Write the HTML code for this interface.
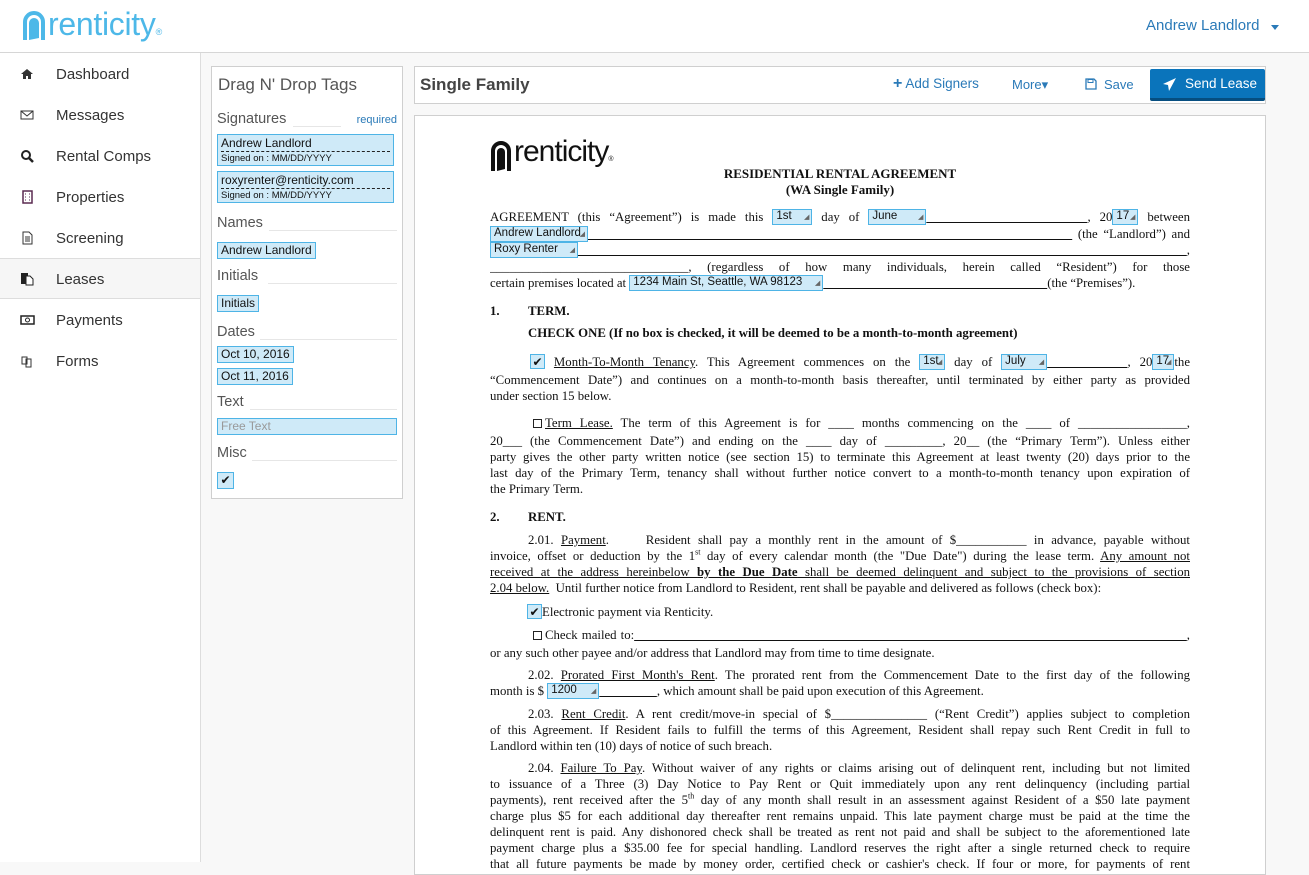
<!DOCTYPE html>
<html><head><meta charset="utf-8"><style>
*{box-sizing:border-box;margin:0;padding:0}
body{width:1309px;height:862px;overflow:hidden;background:#f8f8f8;font-family:"Liberation Sans",sans-serif;position:relative;color:#333}
.hdr{position:absolute;left:0;top:0;width:1309px;height:53px;background:#fff;border-bottom:1px solid #d6d6d6}
.side{position:absolute;left:0;top:53px;width:201px;height:809px;background:#fff;border-right:1px solid #ddd}
.nav{position:absolute;left:0;width:200px;height:41px;font-size:15px;color:#333;line-height:41px}
.nav span{position:absolute;left:56px}
.nav i{position:absolute;left:20px;top:13px;width:15px;height:15px;line-height:0}
.nav i svg{display:block}
.act{background:#f6f6f6;border-top:1px solid #ddd;border-bottom:1px solid #ddd}
.panel{position:absolute;background:#fff;border:1px solid #cfcfcf}
.sec{position:absolute;left:217px;width:180px;font-size:14.5px;color:#555;height:18px}
.tag{position:absolute;background:#cfeaf8;border:1px solid #4eb4e6;font-size:12px;color:#111;padding:0 3px;line-height:15px}
.doc{font-family:"Liberation Serif",serif;font-size:12.8px;color:#111}
.l{position:absolute;left:490px;width:700px;height:17px;line-height:16px;text-align:justify;text-align-last:justify;overflow:hidden;white-space:nowrap}
.nl{text-align:left;text-align-last:left}
.f{display:inline-block;background:#cfeaf8;border:1px solid #4eb4e6;font-family:"Liberation Sans",sans-serif;font-size:11.5px;line-height:13px;height:16px;padding:0 3px;vertical-align:top;position:relative;text-align:left;text-align-last:left;white-space:nowrap;overflow:hidden}
.f:after{content:"◢";position:absolute;right:2px;bottom:0;font-size:7px;color:#666}
.u{text-decoration:underline}
.cb{display:inline-block;width:15px;height:15px;border:1px solid #4eb4e6;background:#cfeaf8;vertical-align:top;text-align:center;font-size:12px;line-height:14px;font-family:"DejaVu Sans",sans-serif;text-align-last:center}
.bx{display:inline-block;width:9px;height:9px;border:1px solid #222;vertical-align:-1px;margin-right:3px}
.b{font-weight:bold}
.ln{position:absolute;bottom:2px;right:0;height:1px;background:#e6e6e6}
</style></head><body>
<div class="hdr">
 <svg style="position:absolute;left:22px;top:10px" width="24" height="32" viewBox="0 0 24 32"><path d="M3 30V12A9 9 0 0 1 21 12V30" fill="none" stroke="#4db8e8" stroke-width="4"/><path d="M7 30V13A5 5 0 0 1 17 13V28Z" fill="#4db8e8"/></svg>
 <div style="position:absolute;left:48px;top:6px;font-size:32px;color:#4db8e8;letter-spacing:-0.3px">renticity<span style="font-size:9px">®</span></div>
 <div style="position:absolute;left:1146px;top:17px;font-size:15px;color:#2a7ab8">Andrew Landlord</div>
 <div style="position:absolute;left:1271px;top:25px;border-left:4px solid transparent;border-right:4px solid transparent;border-top:5px solid #2a7ab8"></div>
</div>
<div class="side">
 <div class="nav" style="top:1px"><i><svg width="14" height="14" viewBox="0 0 14 14"><path d="M1 7L7 2L13 7H11V12H8V9H6V12H3V7Z" fill="#333"/></svg></i><span>Dashboard</span></div>
 <div class="nav" style="top:42px"><i><svg width="14" height="14"><rect x="1" y="3" width="12" height="8" fill="none" stroke="#333"/><path d="M1 3L7 8L13 3" fill="none" stroke="#333"/></svg></i><span>Messages</span></div>
 <div class="nav" style="top:83px"><i><svg width="14" height="14"><circle cx="6" cy="6" r="4" fill="none" stroke="#222" stroke-width="2"/><path d="M9 9L13 13" stroke="#222" stroke-width="2.5"/></svg></i><span>Rental Comps</span></div>
 <div class="nav" style="top:124px"><i><svg width="14" height="14"><rect x="3" y="1" width="9" height="12" fill="none" stroke="#5a2a50" stroke-width="1.5"/><path d="M5 4h1M9 4h1M5 7h1M9 7h1M5 10h1M9 10h1" stroke="#5a2a50"/></svg></i><span>Properties</span></div>
 <div class="nav" style="top:165px"><i><svg width="14" height="14"><path d="M3 1H9L12 4V13H3Z" fill="none" stroke="#333"/><path d="M5 6h5M5 8h5M5 10h5" stroke="#333"/></svg></i><span>Screening</span></div>
 <div class="nav act" style="top:205px"><i><svg width="14" height="14"><rect x="1" y="1" width="7" height="11" fill="#222"/><path d="M6 4H10L13 7V13H6Z" fill="#fff" stroke="#222"/></svg></i><span>Leases</span></div>
 <div class="nav" style="top:247px"><i><svg width="15" height="14"><rect x="1" y="3" width="13" height="8" fill="none" stroke="#222" stroke-width="1.5"/><circle cx="7.5" cy="7" r="2" fill="none" stroke="#222"/></svg></i><span>Payments</span></div>
 <div class="nav" style="top:288px"><i><svg width="14" height="14"><path d="M2 3H7V10H2Z M6 5H11V13H6Z" fill="#fff" stroke="#333"/></svg></i><span>Forms</span></div>
</div>
<div class="panel" style="left:211px;top:66px;width:192px;height:433px"></div>
<div style="position:absolute;left:218px;top:75px;font-size:17px;color:#555">Drag N' Drop Tags</div>
<div class="sec" style="top:111px">Signatures<span style="position:absolute;right:0;top:3px;font-size:11px;color:#2a7ab8">required</span><div class="ln" style="left:76px;right:56px"></div></div>
<div class="tag" style="left:217px;top:134px;width:177px;height:32px;line-height:14px;padding-top:1px">Andrew Landlord<div style="border-top:1px dashed #222;margin-top:1px;font-size:9.5px;line-height:13px">Signed on : MM/DD/YYYY</div></div>
<div class="tag" style="left:217px;top:171px;width:177px;height:32px;line-height:14px;padding-top:1px">roxyrenter@renticity.com<div style="border-top:1px dashed #222;margin-top:1px;font-size:9.5px;line-height:13px">Signed on : MM/DD/YYYY</div></div>
<div class="sec" style="top:215px">Names<div class="ln" style="left:52px"></div></div>
<div class="tag" style="left:217px;top:242px">Andrew Landlord</div>
<div class="sec" style="top:268px">Initials<div class="ln" style="left:51px"></div></div>
<div class="tag" style="left:217px;top:295px">Initials</div>
<div class="sec" style="top:324px">Dates<div class="ln" style="left:43px"></div></div>
<div class="tag" style="left:217px;top:346px">Oct 10, 2016</div>
<div class="tag" style="left:217px;top:368px">Oct 11, 2016</div>
<div class="sec" style="top:394px">Text<div class="ln" style="left:33px"></div></div>
<div class="tag" style="left:217px;top:418px;width:180px;color:#999">Free Text</div>
<div class="sec" style="top:445px">Misc<div class="ln" style="left:35px"></div></div>
<div class="tag" style="left:217px;top:472px;width:17px;height:17px;padding:0;text-align:center;font-family:'DejaVu Sans';font-size:12px">✔</div>

<div class="panel" style="left:414px;top:66px;width:852px;height:38px"></div>
<div style="position:absolute;left:420px;top:75px;font-size:17px;font-weight:bold;color:#444">Single Family</div>
<div style="position:absolute;left:893px;top:76px;font-size:13.5px;color:#2a7ab8"><b style="font-size:16px;line-height:12px">+</b> Add Signers</div>
<div style="position:absolute;left:1012px;top:77px;font-size:13px;color:#2a7ab8">More▾</div>
<div style="position:absolute;left:1085px;top:77px;font-size:13px;color:#2a7ab8"><svg width="12" height="12" style="vertical-align:-1px;margin-right:7px"><path d="M1 1H9L11 3V11H1Z" fill="none" stroke="#2a7ab8" stroke-width="1.3"/><rect x="3" y="1.5" width="5" height="3" fill="none" stroke="#2a7ab8"/></svg>Save</div>
<div style="position:absolute;left:1150px;top:69px;width:115px;height:32px;background:#0a74bb;border-bottom:3px solid #064e80;border-radius:2px;color:#fff;font-size:13.5px;line-height:30px;padding-left:35px">Send Lease
 <svg style="position:absolute;left:12px;top:8px" width="15" height="15" viewBox="0 0 15 15"><path d="M14 1L1 7L6 8L7 14Z" fill="#fff"/></svg></div>

<div class="panel" style="left:414px;top:115px;width:852px;height:760px"></div>
<div class="doc">
 <svg style="position:absolute;left:490px;top:140px" width="22" height="32" viewBox="0 0 22 32"><path d="M3 31V11A8 8 0 0 1 19 11V31" fill="none" stroke="#111" stroke-width="4"/><path d="M7 31V12A4 4 0 0 1 15 12V29Z" fill="#111"/></svg>
 <div style="position:absolute;left:514px;top:135px;font-family:'Liberation Sans';font-size:30px;letter-spacing:-1px;color:#111">renticity<span style="font-size:7px">®</span></div>
 <div class="b" style="position:absolute;left:640px;width:400px;text-align:center;top:166px;font-size:13px">RESIDENTIAL RENTAL AGREEMENT</div>
 <div class="b" style="position:absolute;left:640px;width:400px;text-align:center;top:182px;font-size:13px">(WA Single Family)</div>

 <div class="l" style="top:209px">AGREEMENT (this “Agreement”) is made this <span class="f" style="width:40px">1st</span> day of <span class="f" style="width:58px">June</span><span class="u">&nbsp;&nbsp;&nbsp;&nbsp;&nbsp;&nbsp;&nbsp;&nbsp;&nbsp;&nbsp;&nbsp;&nbsp;&nbsp;&nbsp;&nbsp;&nbsp;&nbsp;&nbsp;</span>, 20<span class="f" style="width:26px">17</span> between</div>
 <div class="l" style="top:226px"><span class="f" style="width:98px">Andrew Landlord</span><span class="u">&nbsp;&nbsp;&nbsp;&nbsp;&nbsp;&nbsp;&nbsp;&nbsp;&nbsp;&nbsp;&nbsp;&nbsp;&nbsp;&nbsp;&nbsp;&nbsp;&nbsp;&nbsp;&nbsp;&nbsp;&nbsp;&nbsp;&nbsp;&nbsp;&nbsp;&nbsp;&nbsp;&nbsp;&nbsp;&nbsp;&nbsp;&nbsp;&nbsp;&nbsp;&nbsp;&nbsp;&nbsp;&nbsp;&nbsp;&nbsp;&nbsp;&nbsp;&nbsp;&nbsp;&nbsp;&nbsp;&nbsp;&nbsp;&nbsp;&nbsp;&nbsp;&nbsp;&nbsp;&nbsp;&nbsp;&nbsp;&nbsp;&nbsp;&nbsp;&nbsp;&nbsp;&nbsp;&nbsp;&nbsp;&nbsp;&nbsp;&nbsp;&nbsp;&nbsp;&nbsp;&nbsp;&nbsp;&nbsp;&nbsp;&nbsp;&nbsp;&nbsp;&nbsp;&nbsp;&nbsp;&nbsp;&nbsp;&nbsp;&nbsp;&nbsp;&nbsp;</span> (the “Landlord”) and</div>
 <div class="l" style="top:242px"><span class="f" style="width:88px">Roxy Renter</span><span class="u">&nbsp;&nbsp;&nbsp;&nbsp;&nbsp;&nbsp;&nbsp;&nbsp;&nbsp;&nbsp;&nbsp;&nbsp;&nbsp;&nbsp;&nbsp;&nbsp;&nbsp;&nbsp;&nbsp;&nbsp;&nbsp;&nbsp;&nbsp;&nbsp;&nbsp;&nbsp;&nbsp;&nbsp;&nbsp;&nbsp;&nbsp;&nbsp;&nbsp;&nbsp;&nbsp;&nbsp;&nbsp;&nbsp;&nbsp;&nbsp;&nbsp;&nbsp;&nbsp;&nbsp;&nbsp;&nbsp;&nbsp;&nbsp;&nbsp;&nbsp;&nbsp;&nbsp;&nbsp;&nbsp;&nbsp;&nbsp;&nbsp;&nbsp;&nbsp;&nbsp;&nbsp;&nbsp;&nbsp;&nbsp;&nbsp;&nbsp;&nbsp;&nbsp;&nbsp;&nbsp;&nbsp;&nbsp;&nbsp;&nbsp;&nbsp;&nbsp;&nbsp;&nbsp;&nbsp;&nbsp;&nbsp;&nbsp;&nbsp;&nbsp;&nbsp;&nbsp;&nbsp;&nbsp;&nbsp;&nbsp;&nbsp;&nbsp;&nbsp;&nbsp;&nbsp;&nbsp;&nbsp;&nbsp;&nbsp;&nbsp;&nbsp;&nbsp;&nbsp;&nbsp;&nbsp;&nbsp;&nbsp;&nbsp;&nbsp;&nbsp;&nbsp;&nbsp;&nbsp;&nbsp;&nbsp;&nbsp;&nbsp;&nbsp;&nbsp;&nbsp;&nbsp;&nbsp;&nbsp;&nbsp;&nbsp;&nbsp;&nbsp;&nbsp;&nbsp;&nbsp;&nbsp;</span>,</div>
 <div class="l" style="top:259px">_______________________________, (regardless of how many individuals, herein called “Resident”) for those</div>
 <div class="l nl" style="top:275px">certain premises located at <span class="f" style="width:194px">1234 Main St, Seattle, WA 98123</span><span class="u">&nbsp;&nbsp;&nbsp;&nbsp;&nbsp;&nbsp;&nbsp;&nbsp;&nbsp;&nbsp;&nbsp;&nbsp;&nbsp;&nbsp;&nbsp;&nbsp;&nbsp;&nbsp;&nbsp;&nbsp;&nbsp;&nbsp;&nbsp;&nbsp;&nbsp;&nbsp;&nbsp;&nbsp;&nbsp;&nbsp;&nbsp;&nbsp;&nbsp;&nbsp;&nbsp;&nbsp;&nbsp;&nbsp;&nbsp;&nbsp;&nbsp;&nbsp;&nbsp;&nbsp;&nbsp;&nbsp;&nbsp;&nbsp;&nbsp;&nbsp;&nbsp;&nbsp;&nbsp;&nbsp;&nbsp;&nbsp;&nbsp;&nbsp;&nbsp;&nbsp;&nbsp;&nbsp;&nbsp;&nbsp;&nbsp;&nbsp;&nbsp;&nbsp;&nbsp;&nbsp;</span>(the “Premises”).</div>

 <div class="b" style="position:absolute;left:490px;top:304px">1.</div><div class="b" style="position:absolute;left:528px;top:304px">TERM.</div>
 <div class="b" style="position:absolute;left:528px;top:326px;font-size:12.8px">CHECK ONE (If no box is checked, it will be deemed to be a month-to-month agreement)</div>

 <div class="l" style="top:354px;left:530px;width:660px"><span class="cb">✔</span> <span class="u">Month-To-Month Tenancy</span>. This Agreement commences on the <span class="f" style="width:26px">1st</span> day of <span class="f" style="width:46px">July</span><span class="u">&nbsp;&nbsp;&nbsp;&nbsp;&nbsp;&nbsp;&nbsp;&nbsp;&nbsp;</span>, 20<span class="f" style="width:22px">17</span>the</div>
 <div class="l" style="top:372px">“Commencement Date”) and continues on a month-to-month basis thereafter, until terminated by either party as provided</div>
 <div class="l nl" style="top:388px">under section 15 below.</div>

 <div class="l" style="top:415px;left:533px;width:657px"><span class="bx"></span><span class="u">Term Lease.</span> The term of this Agreement is for ____ months commencing on the ____ of _________________,</div>
 <div class="l" style="top:433px">20___ (the Commencement Date”) and ending on the ____ day of _________, 20__ (the “Primary Term”). Unless either</div>
 <div class="l" style="top:449px">party gives the other party written notice (see section 15) to terminate this Agreement at least twenty (20) days prior to the</div>
 <div class="l" style="top:465px">last day of the Primary Term, tenancy shall without further notice convert to a month-to-month tenancy upon expiration of</div>
 <div class="l nl" style="top:481px">the Primary Term.</div>

 <div class="b" style="position:absolute;left:490px;top:510px">2.</div><div class="b" style="position:absolute;left:528px;top:510px">RENT.</div>
 <div class="l" style="top:532px;left:528px;width:662px">2.01. <span class="u">Payment</span>. &nbsp;&nbsp;&nbsp; Resident shall pay a monthly rent in the amount of $___________ in advance, payable without</div>
 <div class="l" style="top:548px">invoice, offset or deduction by the 1<sup style="font-size:8px;line-height:0">st</sup> day of every calendar month (the "Due Date") during the lease term. <span class="u">Any amount not</span></div>
 <div class="l u" style="top:564px">received at the address hereinbelow <b>by the Due Date</b> shall be deemed delinquent and subject to the provisions of section</div>
 <div class="l nl" style="top:580px"><span class="u">2.04 below.</span> &nbsp;Until further notice from Landlord to Resident, rent shall be payable and delivered as follows (check box):</div>
 <div class="l nl" style="top:604px;left:527px"><span class="cb">✔</span>Electronic payment via Renticity.</div>
 <div class="l" style="top:627px;left:533px;width:657px"><span class="bx"></span>Check mailed to:<span class="u">&nbsp;&nbsp;&nbsp;&nbsp;&nbsp;&nbsp;&nbsp;&nbsp;&nbsp;&nbsp;&nbsp;&nbsp;&nbsp;&nbsp;&nbsp;&nbsp;&nbsp;&nbsp;&nbsp;&nbsp;&nbsp;&nbsp;&nbsp;&nbsp;&nbsp;&nbsp;&nbsp;&nbsp;&nbsp;&nbsp;&nbsp;&nbsp;&nbsp;&nbsp;&nbsp;&nbsp;&nbsp;&nbsp;&nbsp;&nbsp;&nbsp;&nbsp;&nbsp;&nbsp;&nbsp;&nbsp;&nbsp;&nbsp;&nbsp;&nbsp;&nbsp;&nbsp;&nbsp;&nbsp;&nbsp;&nbsp;&nbsp;&nbsp;&nbsp;&nbsp;&nbsp;&nbsp;&nbsp;&nbsp;&nbsp;&nbsp;&nbsp;&nbsp;&nbsp;&nbsp;&nbsp;&nbsp;&nbsp;&nbsp;&nbsp;&nbsp;&nbsp;&nbsp;&nbsp;&nbsp;&nbsp;&nbsp;&nbsp;&nbsp;&nbsp;&nbsp;&nbsp;&nbsp;&nbsp;&nbsp;&nbsp;&nbsp;&nbsp;&nbsp;&nbsp;&nbsp;&nbsp;&nbsp;&nbsp;&nbsp;&nbsp;&nbsp;&nbsp;&nbsp;&nbsp;&nbsp;&nbsp;&nbsp;&nbsp;&nbsp;&nbsp;&nbsp;&nbsp;&nbsp;&nbsp;&nbsp;&nbsp;&nbsp;&nbsp;&nbsp;&nbsp;&nbsp;&nbsp;&nbsp;&nbsp;&nbsp;&nbsp;&nbsp;&nbsp;&nbsp;&nbsp;&nbsp;&nbsp;&nbsp;&nbsp;&nbsp;</span>,</div>
 <div class="l nl" style="top:645px">or any such other payee and/or address that Landlord may from time to time designate.</div>
 <div class="l" style="top:667px;left:528px;width:662px">2.02. <span class="u">Prorated First Month's Rent</span>. The prorated rent from the Commencement Date to the first day of the following</div>
 <div class="l nl" style="top:683px">month is $ <span class="f" style="width:52px">1200</span><span class="u">&nbsp;&nbsp;&nbsp;&nbsp;&nbsp;&nbsp;&nbsp;&nbsp;&nbsp;&nbsp;&nbsp;&nbsp;&nbsp;&nbsp;&nbsp;&nbsp;&nbsp;&nbsp;</span>, which amount shall be paid upon execution of this Agreement.</div>
 <div class="l" style="top:706px;left:528px;width:662px">2.03. <span class="u">Rent Credit</span>. A rent credit/move-in special of $_______________ (“Rent Credit”) applies subject to completion</div>
 <div class="l" style="top:722px">of this Agreement. If Resident fails to fulfill the terms of this Agreement, Resident shall repay such Rent Credit in full to</div>
 <div class="l nl" style="top:738px">Landlord within ten (10) days of notice of such breach.</div>
 <div class="l" style="top:760px;left:528px;width:662px">2.04. <span class="u">Failure To Pay</span>. Without waiver of any rights or claims arising out of delinquent rent, including but not limited</div>
 <div class="l" style="top:776px">to issuance of a Three (3) Day Notice to Pay Rent or Quit immediately upon any rent delinquency (including partial</div>
 <div class="l" style="top:792px">payments), rent received after the 5<sup style="font-size:8px;line-height:0">th</sup> day of any month shall result in an assessment against Resident of a $50 late payment</div>
 <div class="l" style="top:808px">charge plus $5 for each additional day thereafter rent remains unpaid. This late payment charge must be paid at the time the</div>
 <div class="l" style="top:824px">delinquent rent is paid. Any dishonored check shall be treated as rent not paid and shall be subject to the aforementioned late</div>
 <div class="l" style="top:840px">payment charge plus a $35.00 fee for special handling. Landlord reserves the right after a single returned check to require</div>
 <div class="l" style="top:856px">that all future payments be made by money order, certified check or cashier's check. If four or more, for payments of rent</div>
</div>
</body></html>
